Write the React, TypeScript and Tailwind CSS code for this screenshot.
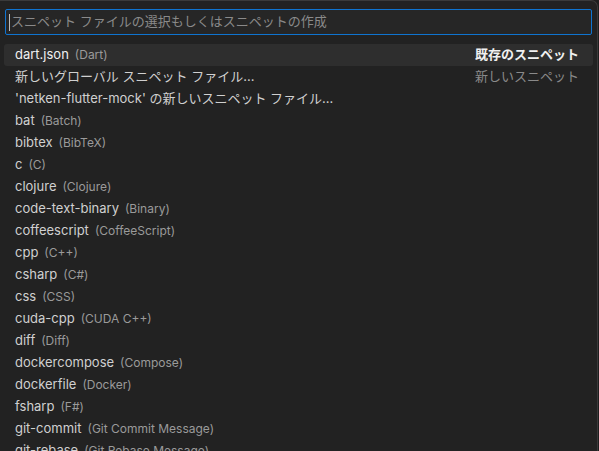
type Item = {
  label: string;
  description?: string;
  detail?: string;
};

const items: Item[] = [
  { label: "dart.json", description: "(Dart)", detail: "既存のスニペット" },
  { label: "新しいグローバル スニペット ファイル...", detail: "新しいスニペット" },
  { label: "'netken-flutter-mock' の新しいスニペット ファイル..." },
  { label: "bat", description: "(Batch)" },
  { label: "bibtex", description: "(BibTeX)" },
  { label: "c", description: "(C)" },
  { label: "clojure", description: "(Clojure)" },
  { label: "code-text-binary", description: "(Binary)" },
  { label: "coffeescript", description: "(CoffeeScript)" },
  { label: "cpp", description: "(C++)" },
  { label: "csharp", description: "(C#)" },
  { label: "css", description: "(CSS)" },
  { label: "cuda-cpp", description: "(CUDA C++)" },
  { label: "diff", description: "(Diff)" },
  { label: "dockercompose", description: "(Compose)" },
  { label: "dockerfile", description: "(Docker)" },
  { label: "fsharp", description: "(F#)" },
  { label: "git-commit", description: "(Git Commit Message)" },
  { label: "git-rebase", description: "(Git Rebase Message)" },
];

export default function App() {
  return (
    <div
      className="h-[451px] w-[599px] overflow-hidden bg-[#1e1e1e]"
      style={{ fontFamily: "Inter, 'Noto Sans CJK JP', sans-serif" }}
    >
      <div className="h-full w-[598px] overflow-hidden rounded-tr-[7px] border-t border-r border-[#3a3a3a] bg-[#222222]">
        {/* input */}
        <div className="px-[5px] pt-[8px]">
          <div className="flex h-[26px] items-center rounded-[2px] border border-[#0f74d0] bg-[#262626] pl-[3px]">
            <span className="mr-px h-[17px] w-px bg-[#bdbdbd]" />
            <span className="text-[13px] text-[#8a8a8a]">
              スニペット ファイルの選択もしくはスニペットの作成
            </span>
          </div>
        </div>

        {/* list */}
        <ul className="mt-[9px] px-[4px]">
          {items.map((item, i) => {
            const selected = i === 0;
            return (
              <li
                key={item.label}
                className={`flex h-[22px] items-center rounded-[3px] pl-[11px] pr-[14px] ${
                  selected ? "bg-[#2e2e2e]" : ""
                }`}
              >
                <span
                  className={`whitespace-nowrap text-[13px] ${
                    selected ? "text-[#f0f0f0]" : "text-[#d0d0d0]"
                  }`}
                >
                  {item.label}
                </span>
                {item.description && (
                  <span className="ml-[6px] whitespace-nowrap text-[12px] text-[#9a9a9a]">
                    {item.description}
                  </span>
                )}
                {item.detail && (
                  <span
                    className={`ml-auto whitespace-nowrap text-[13px] ${
                      selected ? "font-semibold text-[#f0f0f0]" : "text-[#8a8a8a]"
                    }`}
                  >
                    {item.detail}
                  </span>
                )}
              </li>
            );
          })}
        </ul>
      </div>
    </div>
  );
}
